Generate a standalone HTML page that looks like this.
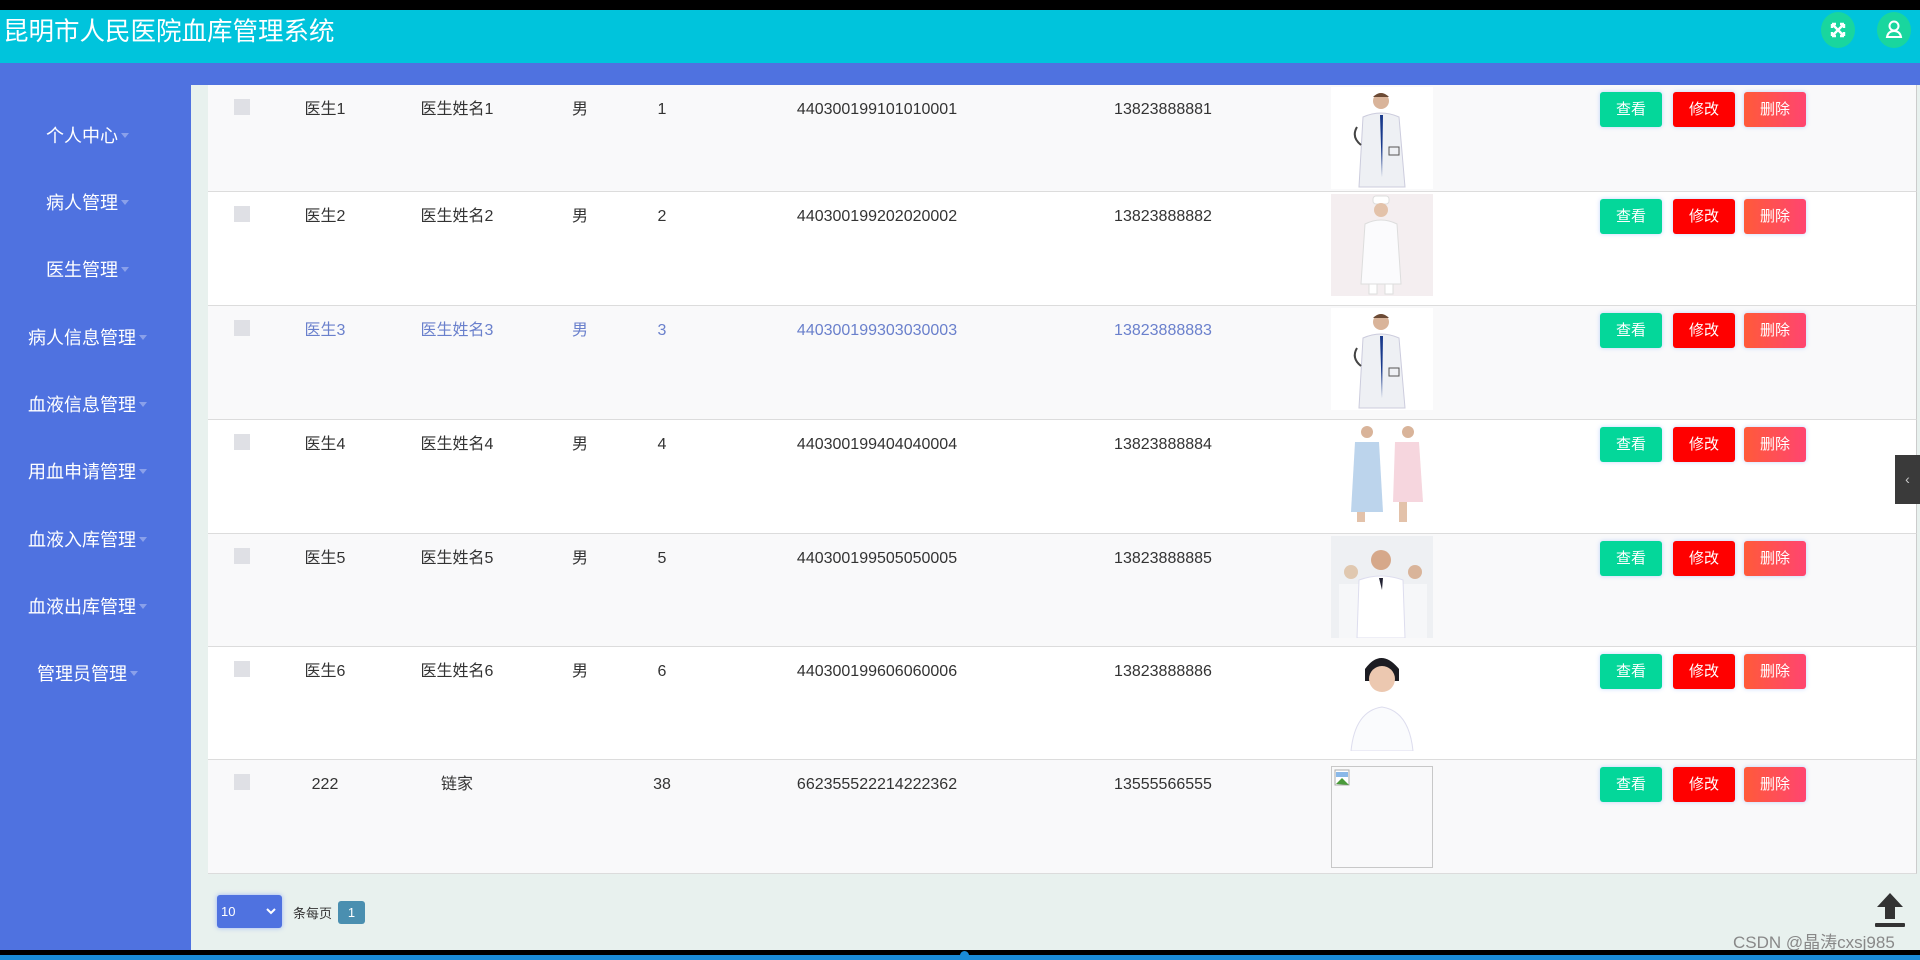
<!DOCTYPE html>
<html><head><meta charset="utf-8"><style>
*{margin:0;padding:0;box-sizing:border-box}
body{width:1920px;height:960px;overflow:hidden;background:#000;font-family:"Liberation Sans","Noto Sans CJK SC",sans-serif;position:relative}
.abs{position:absolute}
.hdr{left:0;top:10px;width:1920px;height:53px;background:#00c4dc}
.title{left:3px;top:14px;color:#fff;font-size:25.5px;line-height:36px}
.ic{width:34px;height:36px;border-radius:50%;background:#19d69e;top:12px}
.band{left:0;top:63px;width:1920px;height:22px;background:#4f72e0}
.side{left:0;top:85px;width:191px;height:865px;background:#4f72e0}
.mi{width:175px;text-align:center;color:#fff;font-size:18px;left:0;line-height:24px}
.mi:after{content:"";display:inline-block;border:4px solid transparent;border-top:5px solid #8aa0ea;margin-left:3px;vertical-align:middle}
.content{left:191px;top:85px;width:1729px;height:865px;background:#e8f1ee}
.row{left:208px;width:1709px;border-bottom:1px solid #dcdcdc;border-right:1px solid #ccc}
.row.o{background:#f9f9fa}.row.e{background:#fff}
.c{position:absolute;top:14px;font-size:16px;line-height:22px;height:22px;color:#333;transform:translateX(-50%);white-space:nowrap}
.row.h .c{color:#6a80cc}
.cb{position:absolute;left:26px;top:14px;width:16px;height:16px;background:#dfe0e5}
.img{position:absolute;left:1123px;top:2px;width:102px;height:102px;overflow:hidden}
.btn{position:absolute;top:7px;width:62px;height:35px;border-radius:3px;color:#fff;font-size:15px;text-align:center;line-height:35px;box-shadow:0 0 4px rgba(80,140,255,.35)}
.b1{left:1392px;background:#04d79a}.b2{left:1465px;background:#ff0000}.b3{left:1536px;background:linear-gradient(90deg,#ff5a3a,#ff4570)}
</style></head><body>
<div class="abs hdr"></div>
<div class="abs title">昆明市人民医院血库管理系统</div>
<div class="abs ic" style="left:1821px"><svg width="34" height="36" viewBox="0 0 34 36"><path d="M11 12l12 12M23 12L11 24M11 12h4M11 12v4M23 12h-4M23 12v4M11 24h4M11 24v-4M23 24h-4M23 24v-4" stroke="#fff" stroke-width="2.4" fill="none"/></svg></div>
<div class="abs ic" style="left:1877px"><svg width="34" height="36" viewBox="0 0 34 36"><circle cx="17" cy="14" r="4.5" stroke="#fff" stroke-width="2" fill="none"/><path d="M10 25c1-5 4-6 7-6s6 1 7 6z" stroke="#fff" stroke-width="2" fill="none"/></svg></div>
<div class="abs band"></div>
<div class="abs side"></div>
<div class="abs mi" style="top:124px">个人中心</div>
<div class="abs mi" style="top:191px">病人管理</div>
<div class="abs mi" style="top:258px">医生管理</div>
<div class="abs mi" style="top:326px">病人信息管理</div>
<div class="abs mi" style="top:393px">血液信息管理</div>
<div class="abs mi" style="top:460px">用血申请管理</div>
<div class="abs mi" style="top:528px">血液入库管理</div>
<div class="abs mi" style="top:595px">血液出库管理</div>
<div class="abs mi" style="top:662px">管理员管理</div>
<div class="abs content"></div>

<div class="abs row o" style="top:85px;height:107px"><div class="cb"></div><div class="c" style="left:117px">医生1</div><div class="c" style="left:249px">医生姓名1</div><div class="c" style="left:372px">男</div><div class="c" style="left:454px">1</div><div class="c" style="left:669px">440300199101010001</div><div class="c" style="left:955px">13823888881</div>
<div class="img" style="background:#fff"><svg width="102" height="102"><circle cx="50" cy="14" r="8" fill="#d9b49a"/><path d="M42 10q8-8 16 0" fill="#6b4a35"/><path d="M32 30q18-8 36 0l6 70H28z" fill="#eef0f4" stroke="#ccd" /><path d="M49 28h3l-1 62z" fill="#1a3a8c"/><path d="M26 40q-6 10 4 18" stroke="#444" stroke-width="2" fill="none"/><rect x="58" y="60" width="10" height="8" fill="none" stroke="#555"/></svg></div>
<div class="btn b1">查看</div><div class="btn b2">修改</div><div class="btn b3">删除</div></div>

<div class="abs row e" style="top:192px;height:114px"><div class="cb"></div><div class="c" style="left:117px">医生2</div><div class="c" style="left:249px">医生姓名2</div><div class="c" style="left:372px">男</div><div class="c" style="left:454px">2</div><div class="c" style="left:669px">440300199202020002</div><div class="c" style="left:955px">13823888882</div>
<div class="img" style="background:#f4eef0"><svg width="102" height="102"><rect x="42" y="2" width="16" height="8" rx="3" fill="#fff" stroke="#ddd"/><circle cx="50" cy="16" r="7" fill="#e3c2aa"/><path d="M34 30q16-8 32 0l4 60H30z" fill="#fbfbfd" stroke="#ddd"/><path d="M38 90h8v10h-8zM54 90h8v10h-8z" fill="#fff" stroke="#ddd"/></svg></div>
<div class="btn b1">查看</div><div class="btn b2">修改</div><div class="btn b3">删除</div></div>

<div class="abs row o h" style="top:306px;height:114px"><div class="cb"></div><div class="c" style="left:117px">医生3</div><div class="c" style="left:249px">医生姓名3</div><div class="c" style="left:372px">男</div><div class="c" style="left:454px">3</div><div class="c" style="left:669px">440300199303030003</div><div class="c" style="left:955px">13823888883</div>
<div class="img" style="background:#fff"><svg width="102" height="102"><circle cx="50" cy="14" r="8" fill="#d9b49a"/><path d="M42 10q8-8 16 0" fill="#6b4a35"/><path d="M32 30q18-8 36 0l6 70H28z" fill="#eef0f4" stroke="#ccd" /><path d="M49 28h3l-1 62z" fill="#1a3a8c"/><path d="M26 40q-6 10 4 18" stroke="#444" stroke-width="2" fill="none"/><rect x="58" y="60" width="10" height="8" fill="none" stroke="#555"/></svg></div>
<div class="btn b1">查看</div><div class="btn b2">修改</div><div class="btn b3">删除</div></div>

<div class="abs row e" style="top:420px;height:114px"><div class="cb"></div><div class="c" style="left:117px">医生4</div><div class="c" style="left:249px">医生姓名4</div><div class="c" style="left:372px">男</div><div class="c" style="left:454px">4</div><div class="c" style="left:669px">440300199404040004</div><div class="c" style="left:955px">13823888884</div>
<div class="img" style="background:#fff"><svg width="102" height="102"><circle cx="36" cy="10" r="6" fill="#d9b49a"/><circle cx="77" cy="10" r="6" fill="#d9b49a"/><path d="M24 20h24l4 70H20z" fill="#bcd4ec"/><path d="M64 20h24l4 60H62z" fill="#f6d6de"/><path d="M26 90h8v10h-8zM68 80h8v20h-8z" fill="#e3c2aa"/></svg></div>
<div class="btn b1">查看</div><div class="btn b2">修改</div><div class="btn b3">删除</div></div>

<div class="abs row o" style="top:534px;height:113px"><div class="cb"></div><div class="c" style="left:117px">医生5</div><div class="c" style="left:249px">医生姓名5</div><div class="c" style="left:372px">男</div><div class="c" style="left:454px">5</div><div class="c" style="left:669px">440300199505050005</div><div class="c" style="left:955px">13823888885</div>
<div class="img" style="background:#eef0f3"><svg width="102" height="102"><circle cx="20" cy="36" r="7" fill="#e0c8b0"/><circle cx="84" cy="36" r="7" fill="#d9b49a"/><path d="M8 48h26v54H8zM70 48h26v54H70z" fill="#f6f7f9"/><circle cx="50" cy="24" r="10" fill="#d6a88a"/><path d="M28 44q22-8 44 0l2 58H26z" fill="#fff" stroke="#dde"/><path d="M48 42h4l-1 12z" fill="#223"/></svg></div>
<div class="btn b1">查看</div><div class="btn b2">修改</div><div class="btn b3">删除</div></div>

<div class="abs row e" style="top:647px;height:113px"><div class="cb"></div><div class="c" style="left:117px">医生6</div><div class="c" style="left:249px">医生姓名6</div><div class="c" style="left:372px">男</div><div class="c" style="left:454px">6</div><div class="c" style="left:669px">440300199606060006</div><div class="c" style="left:955px">13823888886</div>
<div class="img" style="background:#fff"><svg width="102" height="102"><path d="M34 20q16-22 34 0v12H34z" fill="#1c1c22"/><circle cx="51" cy="30" r="13" fill="#ecc8b0"/><path d="M20 102q4-40 31-44q27 4 31 44z" fill="#fafbfd" stroke="#dde"/></svg></div>
<div class="btn b1">查看</div><div class="btn b2">修改</div><div class="btn b3">删除</div></div>

<div class="abs row o" style="top:760px;height:114px"><div class="cb"></div><div class="c" style="left:117px">222</div><div class="c" style="left:249px">链家</div><div class="c" style="left:454px">38</div><div class="c" style="left:669px">662355522214222362</div><div class="c" style="left:955px">13555566555</div>
<div class="img" style="border:1px solid #c8c8c8;top:6px;height:102px"><svg width="20" height="20" style="margin:2px"><rect x="1" y="1" width="14" height="15" fill="#fff" stroke="#aaa"/><path d="M2 15l6-6 7 7z" fill="#4a9a3a"/><path d="M2 3h12v5H2z" fill="#8ab8e8"/></svg></div>
<div class="btn b1">查看</div><div class="btn b2">修改</div><div class="btn b3">删除</div></div>

<div class="abs" style="left:217px;top:895px;width:65px;height:33px;background:#4f72e0;border-radius:3px;box-shadow:0 0 5px rgba(80,120,255,.5);color:#fff;font-size:13px;line-height:33px;padding-left:4px">10<svg style="position:absolute;right:6px;top:13px" width="10" height="7"><path d="M1 1l4 4 4-4" stroke="#fff" stroke-width="2" fill="none"/></svg></div>
<div class="abs" style="left:293px;top:903px;font-size:13px;color:#333">条每页</div>
<div class="abs" style="left:338px;top:901px;width:27px;height:23px;background:#4a8fb0;border-radius:3px;color:#fff;font-size:13px;text-align:center;line-height:23px">1</div>

<svg class="abs" style="left:1871px;top:889px" width="38" height="42" viewBox="0 0 38 42"><path d="M19 4L6 18h8v12h10V18h8z" fill="#333"/><rect x="4" y="34" width="30" height="4" rx="1" fill="#333"/></svg>
<div class="abs" style="left:1733px;top:928px;font-size:17px;color:#888">CSDN @晶涛cxsj985</div>
<div class="abs" style="left:1895px;top:455px;width:25px;height:49px;background:#3a3a3a;color:#ccc;font-size:14px;text-align:center;line-height:49px">&lsaquo;</div>

<div class="abs" style="left:0;top:950px;width:1920px;height:10px;background:#000"></div>
<div class="abs" style="left:0;top:955px;width:1920px;height:5px;background:#1a8cd8"></div>
<div class="abs" style="left:960px;top:951px;width:9px;height:9px;border-radius:50%;background:#1a8cd8"></div>
</body></html>
